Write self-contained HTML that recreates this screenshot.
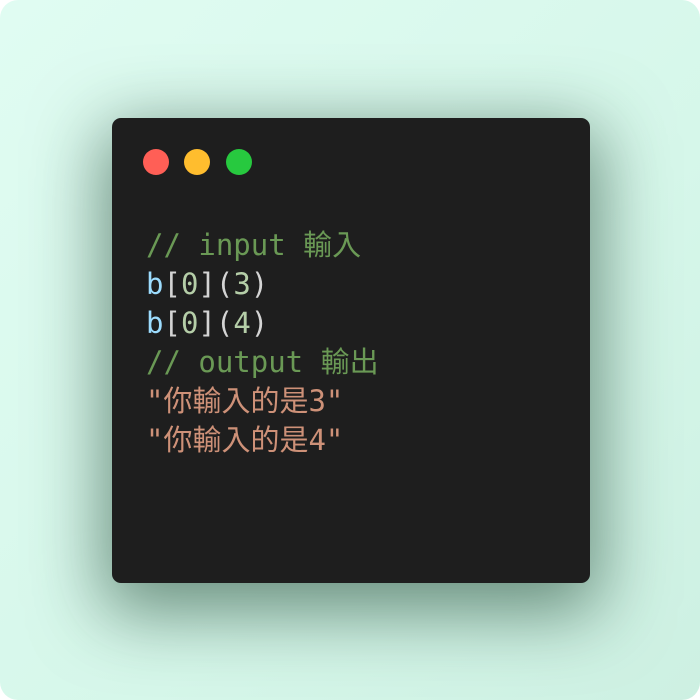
<!DOCTYPE html>
<html><head><meta charset="utf-8"><style>
html,body{margin:0;padding:0;width:700px;height:700px;overflow:hidden;background:#fff}
.bg{position:absolute;left:0;top:0;width:700px;height:700px;border-radius:18px;background:linear-gradient(135deg,#e0fcf2,#d6f7ea 60%,#cdf0e2)}
.card{position:absolute;left:112px;top:118px;width:478px;height:465px;border-radius:9px;background:#1e1e1e;box-shadow:0 20px 70px 10px rgba(20,60,40,.55)}
.dot{position:absolute;top:149px;width:26px;height:26px;border-radius:50%}
.code{position:absolute;left:146px;top:226px;font-family:"DejaVu Sans Mono","Noto Sans CJK TC",monospace;font-size:29px;line-height:39px;white-space:pre;color:#d4d4d4}
.c{color:#6a9955}.v{color:#9cdcfe}.n{color:#b5cea8}.s{color:#ce9178}
</style></head><body>
<div class="bg"></div>
<div class="card"></div>
<div class="dot" style="left:143px;background:#ff5f56"></div>
<div class="dot" style="left:184px;background:#ffbd2e"></div>
<div class="dot" style="left:226px;background:#27c93f"></div>
<div class="code"><span class="c">// input 輸入</span>
<span class="v">b</span>[<span class="n">0</span>](<span class="n">3</span>)
<span class="v">b</span>[<span class="n">0</span>](<span class="n">4</span>)
<span class="c">// output 輸出</span>
<span class="s">"你輸入的是3"</span>
<span class="s">"你輸入的是4"</span></div>
</body></html>
